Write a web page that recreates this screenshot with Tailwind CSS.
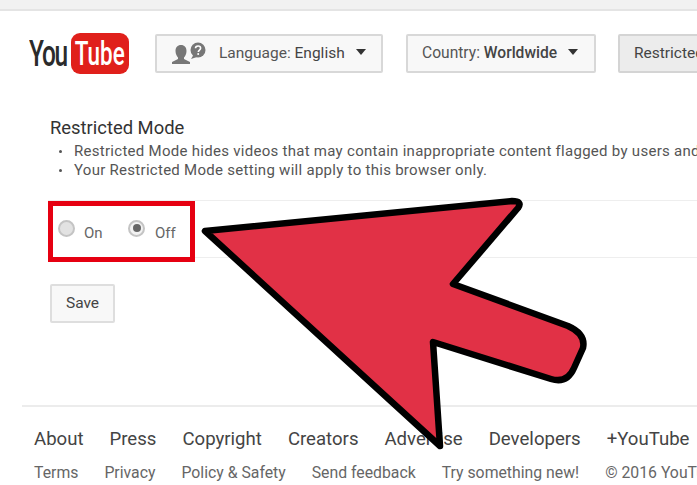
<!DOCTYPE html>
<html lang="en">
<head>
    <meta charset="UTF-8">
    <title>Restricted Mode</title>
    <script src="https://cdn.jsdelivr.net/npm/@tailwindcss/browser@4"></script>
</head>
<body class="relative h-[485px] w-[697px] overflow-hidden bg-white font-['Roboto',sans-serif] text-[#333]">
    <div class="h-[11px] border-b-2 border-[#e4e4e4] bg-[#f1f1f1]"></div>

    <!-- header -->
    <header class="flex h-[85px] items-center whitespace-nowrap">
        <div class="ml-[29px] flex w-[100px] shrink-0 items-center">
            <span class="w-[42px] origin-left scale-x-[.68] text-[36px] leading-none font-medium tracking-tighter text-[#2b2b2b]">You</span>
            <span class="flex h-[41px] w-[58px] justify-center rounded-[9px] bg-[#e0201b] text-[34px] leading-[41px] font-medium text-white"><span class="shrink-0 scale-x-[.66]">Tube</span></span>
        </div>
        <button class="ml-[26px] flex h-[39px] w-[228px] shrink-0 items-center rounded-[2px] border-2 border-[#d8d8d8] bg-[#f8f8f8] pl-[14px] text-[15.500px] text-[#555]">
            <svg class="mr-[12px] h-[24px] w-[36px]" viewBox="0 0 36 24">
                <path d="M10 3c3.500 0 5.500 2.500 5.500 6 0 3-1.500 5.500-2.500 6.500v1.500l6 3v2H1v-2l6-3v-1.500C6 14.500 4.500 12 4.500 9 4.500 5.500 6.500 3 10 3z" fill="#777"/>
                <circle cx="27" cy="8" r="7.500" fill="#777"/>
                <path d="M20 17l3-5 3 3z" fill="#777"/>
                <path d="M24.500 6.300c0-1.500 1.200-2.300 2.600-2.300s2.500.9 2.500 2.200c0 1.800-2.300 1.900-2.300 3.700" fill="none" stroke="#fff" stroke-width="1.600"/>
                <circle cx="27.200" cy="12" r="1" fill="#fff"/>
            </svg>
            <span>Language: <span class="text-[#444]">English</span></span>
            <span class="ml-[11px] h-0 w-0 -translate-y-[2px] border-x-[5.500px] border-t-[6px] border-x-transparent border-t-[#333]"></span>
        </button>
        <button class="ml-[23px] flex h-[39px] w-[190px] shrink-0 items-center rounded-[2px] border-2 border-[#d8d8d8] bg-[#f8f8f8] pl-[14px] text-[15.600px] text-[#555]">
            <span>Country: <span class="font-medium text-[#444]">Worldwide</span></span>
            <span class="ml-[11px] h-0 w-0 -translate-y-[2px] border-x-[5.500px] border-t-[6px] border-x-transparent border-t-[#333]"></span>
        </button>
        <button class="ml-[22px] flex h-[39px] w-[160px] shrink-0 items-center rounded-[2px] border-2 border-[#d4d4d4] bg-[#ececec] pl-[14px] text-[15.500px] text-[#444]">Restricted Mode: Off</button>
    </header>

    <!-- restricted mode panel -->
    <main class="pt-[22px] whitespace-nowrap">
        <div class="pl-[50px]">
            <h1 class="text-[18.400px] leading-[20px] text-[#333]">Restricted Mode</h1>
            <ul class="mt-[4px] pl-[24px] text-[15px] leading-[19px] tracking-[.28px] text-[#555]">
                <li class="relative before:absolute before:top-[8px] before:left-[-15px] before:h-[3px] before:w-[3px] before:rounded-full before:bg-[#555]">Restricted Mode hides videos that may contain inappropriate content flagged by users and other signals.</li>
                <li class="relative before:absolute before:top-[8px] before:left-[-15px] before:h-[3px] before:w-[3px] before:rounded-full before:bg-[#555]">Your Restricted Mode setting will apply to this browser only.</li>
            </ul>
        </div>

        <div class="mt-[20px] ml-[48px] flex h-[58px] items-center border-y border-[#eee] pt-[8px]">
            <div class="flex items-center pl-[10px] text-[15px] text-[#666]">
                <span class="h-[17px] w-[17px] -translate-y-[5px] rounded-full border-2 border-[#c4c4c4] bg-[#e2e2e2]"></span>
                <span class="ml-[9px] w-[44px]">On</span>
                <span class="flex h-[17px] w-[17px] -translate-y-[5px] items-center justify-center rounded-full border-2 border-[#c4c4c4] bg-[#f2f2f2]"><span class="h-[8px] w-[8px] rounded-full bg-[#666]"></span></span>
                <span class="ml-[10px]">Off</span>
            </div>
        </div>

        <button class="mt-[26px] ml-[50px] block h-[39px] w-[65px] rounded-[2px] border-2 border-[#dedede] bg-[#f8f8f8] text-[15.500px] text-[#444]">Save</button>
    </main>

    <!-- footer -->
    <footer class="mt-[82px] ml-[22px] border-t-2 border-[#ececec] pt-[20px] pl-[12px] whitespace-nowrap">
        <div class="flex gap-[26px] text-[18.600px] leading-[24px] text-[#444]">
            <span>About</span><span>Press</span><span>Copyright</span><span>Creators</span><span>Advertise</span><span>Developers</span><span>+YouTube</span>
        </div>
        <div class="mt-[12px] flex gap-[26px] text-[15.800px] leading-[20px] text-[#666]">
            <span>Terms</span><span>Privacy</span><span>Policy &amp; Safety</span><span>Send feedback</span><span>Try something new!</span><span>© 2016 YouTube, LLC</span>
        </div>
    </footer>

    <!-- red box and arrow drawn over the page -->
    <div class="absolute top-[201px] left-[48px] h-[61px] w-[147px] border-[5px] border-[#e60011]"></div>
    <svg class="absolute top-0 left-0 h-[485px] w-[697px]" viewBox="0 0 697 485">
        <path d="M205 231 L512 201 Q523 201 518 208 L453 284 L568 326 Q586 334 583 348 L574 368 Q567 384 551 379 L433 342 L440 446 Z" fill="#e13146" stroke="#000" stroke-width="6.500" stroke-linejoin="round"/>
    </svg>
</body>
</html>
